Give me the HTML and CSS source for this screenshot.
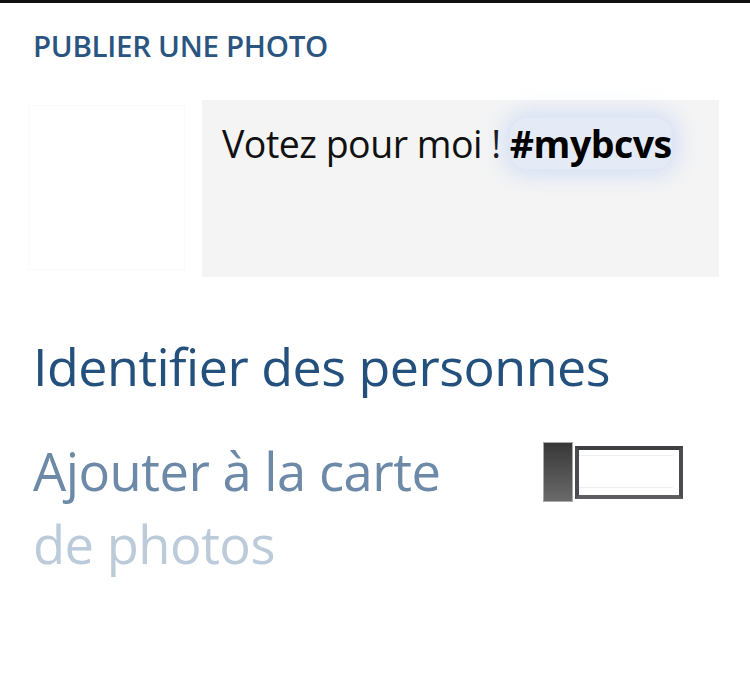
FILE: index.html
```html
<!DOCTYPE html>
<html lang="fr">
<head>
<meta charset="utf-8">
<title>Publier une photo</title>
<link rel="stylesheet" href="styles.css">
</head>
<body>
<div class="screen">
  <h1 class="title">PUBLIER UNE PHOTO</h1>
  <div class="compose">
    <div class="thumb"></div>
    <div class="message">Votez pour moi ! <span class="tag">#mybcvs</span></div>
  </div>
  <div class="tag-people">Identifier des personnes</div>
  <div class="map-row">
    <div class="map-label">
      <span class="line1">Ajouter à la carte</span>
      <span class="line2">de photos</span>
    </div>
    <div class="toggle">
      <div class="knob"></div>
      <div class="track"><div class="inner"></div></div>
    </div>
  </div>
</div>
</body>
</html>
```
FILE: styles.css
```css
html, body {
  margin: 0;
  padding: 0;
  background: #fff;
}
.screen {
  width: 750px;
  height: 697px;
  border-top: 3px solid #111;
  box-sizing: border-box;
  font-family: "Open Sans", "Noto Sans", sans-serif;
  overflow: hidden;
}
.title {
  margin: 0;
  padding: 24px 0 0 33px;
  font-size: 29.5px;
  line-height: 38px;
  font-weight: 600;
  color: #2a5580;
  letter-spacing: -0.3px;
}
.compose {
  display: flex;
  margin-top: 35px;
  gap: 17px;
  height: 177px;
}
.thumb {
  width: 157px;
  height: 165px;
  margin: 5px 0 0 28px;
  border: 1px solid #fafafa;
  box-sizing: border-box;
}
.message {
  width: 517px;
  background: #f4f4f4;
  padding: 17px 20px;
  box-sizing: border-box;
  font-size: 37.5px;
  line-height: 54px;
  color: #111;
  letter-spacing: -0.5px;
}
.tag {
  font-weight: 700;
  color: #000;
  box-shadow: 0 0 20px 8px rgba(160, 192, 250, 0.35);
  background: rgba(195, 215, 252, 0.3);
  border-radius: 18px;
}
.tag-people {
  margin-top: 54px;
  padding-left: 33px;
  font-size: 52px;
  line-height: 70px;
  color: #23507c;
  letter-spacing: -0.5px;
}
.map-row {
  display: flex;
  align-items: flex-start;
  margin-top: 33px;
  padding-left: 33px;
}
.map-label {
  display: flex;
  flex-direction: column;
  width: 510px;
  font-size: 52.5px;
  line-height: 73px;
  letter-spacing: -0.5px;
}
.line1 { color: #6c8aa8; }
.line2 { color: #bccbda; }
.toggle {
  display: flex;
  align-items: center;
  margin-top: 8px;
}
.knob {
  width: 30px;
  height: 60px;
  background: linear-gradient(#383838, #6a6a6a);
  border: 1px solid #aaa;
  box-sizing: border-box;
}
.track {
  width: 108px;
  height: 53px;
  margin-left: 2px;
  border: 4px solid #4a4c50;
  border-top-color: #3c3e42;
  border-bottom-color: #5c5e62;
  box-sizing: border-box;
  background: #fff;
  padding: 5px 0 0 0;
}
.inner {
  height: 31px;
  border-top: 1px solid #eceef0;
  border-bottom: 1px solid #eceef0;
  margin-right: 6px;
}
```
